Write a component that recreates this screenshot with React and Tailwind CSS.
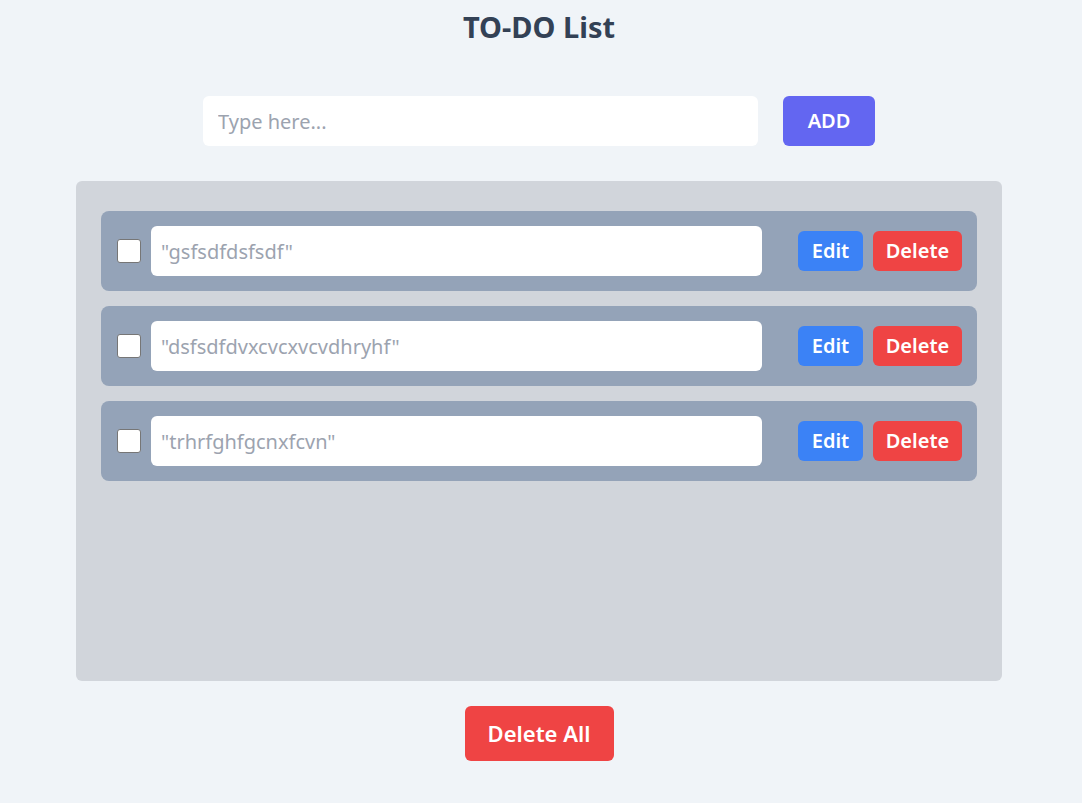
import { useState } from 'react'

const initialTodos = [
  { id: 1, text: '"gsfsdfdsfsdf"', done: false },
  { id: 2, text: '"dsfsdfdvxcvcxvcvdhryhf"', done: false },
  { id: 3, text: '"trhrfghfgcnxfcvn"', done: false },
]

function TodoItem({ todo, onToggle, onDelete }) {
  return (
    <div className="flex items-center h-20 pl-4 pr-[15px] bg-[#94a3b8] rounded-lg">
      <input
        type="checkbox"
        checked={todo.done}
        onChange={() => onToggle(todo.id)}
        className="appearance-none w-6 h-6 shrink-0 bg-white border border-[#767676] rounded-[3px] checked:bg-[#3b82f6]"
      />
      <input
        type="text"
        readOnly
        placeholder={todo.text}
        className="ml-2.5 w-[611px] h-[50px] px-2.5 bg-white rounded-md text-xl text-gray-700 placeholder:text-[#9ca3af] outline-none"
      />
      <div className="ml-auto flex gap-2.5">
        <button className="w-[65px] h-10 bg-[#3b82f6] text-white text-xl font-semibold rounded-md">Edit</button>
        <button
          onClick={() => onDelete(todo.id)}
          className="w-[89px] h-10 bg-[#ef4444] text-white text-xl font-semibold rounded-md"
        >
          Delete
        </button>
      </div>
    </div>
  )
}

export default function App() {
  const [todos, setTodos] = useState(initialTodos)
  const [value, setValue] = useState('')

  const addTodo = () => {
    if (!value.trim()) return
    setTodos([...todos, { id: Date.now(), text: value, done: false }])
    setValue('')
  }

  const toggle = (id) => setTodos(todos.map((t) => (t.id === id ? { ...t, done: !t.done } : t)))
  const remove = (id) => setTodos(todos.filter((t) => t.id !== id))

  return (
    <div className="min-h-[803px] pr-1 bg-[#f0f4f8] font-['Noto_Sans',sans-serif] flex flex-col items-center">
      <h1 className="mt-[7px] text-[29px] leading-[40px] font-bold text-[#334155]">TO-DO List</h1>

      <div className="mt-[49px] flex gap-[25px]">
        <input
          type="text"
          value={value}
          onChange={(e) => setValue(e.target.value)}
          placeholder="Type here..."
          className="w-[555px] h-[50px] px-[15px] bg-white rounded-md text-xl text-gray-700 placeholder:text-[#9ca3af] outline-none"
        />
        <button onClick={addTodo} className="w-[92px] h-[50px] bg-[#6366f1] text-white text-xl font-semibold rounded-md">
          ADD
        </button>
      </div>

      <div className="mt-[35px] w-[926px] h-[500px] p-[25px] pt-[30px] bg-[#d1d5db] rounded-md flex flex-col gap-[15px]">
        {todos.map((todo) => (
          <TodoItem key={todo.id} todo={todo} onToggle={toggle} onDelete={remove} />
        ))}
      </div>

      <button
        onClick={() => setTodos([])}
        className="mt-[25px] w-[149px] h-[55px] bg-[#ef4444] text-white text-[22px] font-semibold rounded-md"
      >
        Delete All
      </button>
    </div>
  )
}
